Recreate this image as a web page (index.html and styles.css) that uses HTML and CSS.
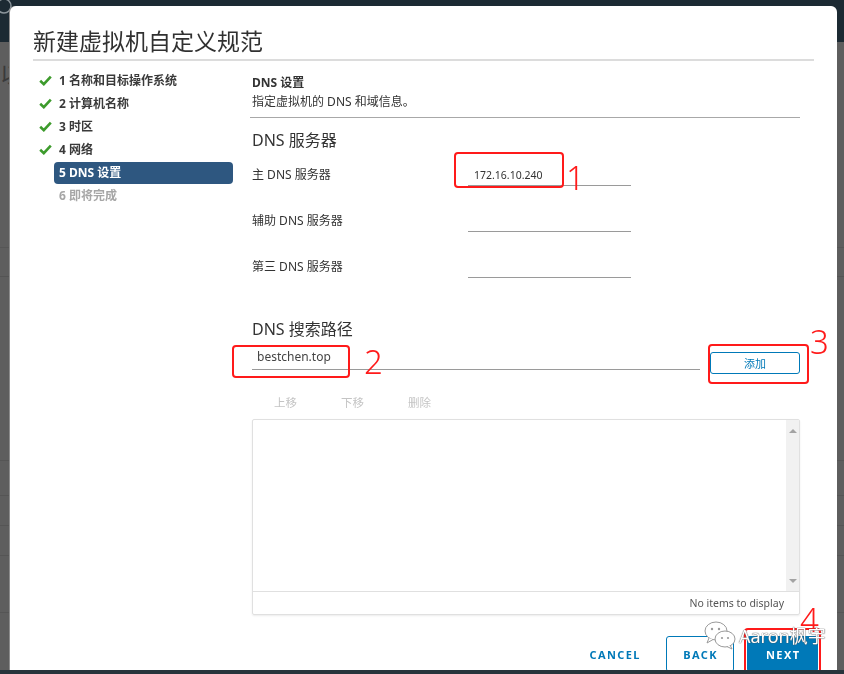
FILE: index.html
```html
<!DOCTYPE html>
<html lang="zh-CN">
<head>
    <meta charset="UTF-8">
    <meta name="viewport" content="width=device-width, initial-scale=1.0">
    <title>新建虚拟机自定义规范</title>
    <link rel="stylesheet" href="styles.css">
</head>
<body>
    <div class="topbar">
        <svg class="search-icon" width="20" height="20" viewBox="0 0 20 20"><circle cx="4" cy="6" r="7" fill="none" stroke="#8a949a" stroke-width="1.5"/></svg>
    </div>
    <div class="backdrop">
        <div class="bg-title">以相</div>
    </div>

    <div class="modal">
        <h1 class="modal-title">新建虚拟机自定义规范</h1>

        <div class="wizard">
            <ul class="steps">
                <li class="step done"><span class="mark"><svg width="13" height="11" viewBox="0 0 13 11"><path d="M1.2 5.8 L4.8 9.2 L11.8 1.6" fill="none" stroke="#3d9b2c" stroke-width="2.6"/></svg></span><span class="step-label">1 名称和目标操作系统</span></li>
                <li class="step done"><span class="mark"><svg width="13" height="11" viewBox="0 0 13 11"><path d="M1.2 5.8 L4.8 9.2 L11.8 1.6" fill="none" stroke="#3d9b2c" stroke-width="2.6"/></svg></span><span class="step-label">2 计算机名称</span></li>
                <li class="step done"><span class="mark"><svg width="13" height="11" viewBox="0 0 13 11"><path d="M1.2 5.8 L4.8 9.2 L11.8 1.6" fill="none" stroke="#3d9b2c" stroke-width="2.6"/></svg></span><span class="step-label">3 时区</span></li>
                <li class="step done"><span class="mark"><svg width="13" height="11" viewBox="0 0 13 11"><path d="M1.2 5.8 L4.8 9.2 L11.8 1.6" fill="none" stroke="#3d9b2c" stroke-width="2.6"/></svg></span><span class="step-label">4 网络</span></li>
                <li class="step active"><span class="mark"></span><span class="step-label">5 DNS 设置</span></li>
                <li class="step disabled"><span class="mark"></span><span class="step-label">6 即将完成</span></li>
            </ul>

            <div class="content">
                <h3 class="page-title">DNS 设置</h3>
                <p class="page-desc">指定虚拟机的 DNS 和域信息。</p>
                <div class="divider"></div>

                <h2 class="section">DNS 服务器</h2>
                <div class="form-row">
                    <label>主 DNS 服务器</label>
                    <div class="field">172.16.10.240</div>
                </div>
                <div class="form-row">
                    <label>辅助 DNS 服务器</label>
                    <div class="field"></div>
                </div>
                <div class="form-row">
                    <label>第三 DNS 服务器</label>
                    <div class="field"></div>
                </div>

                <h2 class="section search-title">DNS 搜索路径</h2>
                <div class="search-row">
                    <div class="search-field">bestchen.top</div>
                    <button class="btn-add">添加</button>
                </div>

                <div class="toolbar">
                    <span class="tool">上移</span>
                    <span class="tool">下移</span>
                    <span class="tool">删除</span>
                </div>

                <div class="grid">
                    <div class="grid-body">
                        <div class="grid-rows"></div>
                        <div class="scrollbar">
                            <span class="arrow-up"></span>
                            <span class="arrow-down"></span>
                        </div>
                    </div>
                    <div class="grid-footer">No items to display</div>
                </div>
            </div>
        </div>

        <div class="modal-footer">
            <button class="btn btn-flat">CANCEL</button>
            <button class="btn btn-outline">BACK</button>
            <button class="btn btn-primary">NEXT</button>
        </div>

        <!-- annotations -->
        <div class="mark-box box-1"></div>
        <div class="mark-num num-1">1</div>
        <div class="mark-box box-2"></div>
        <div class="mark-num num-2">2</div>
        <div class="mark-box box-3"></div>
        <div class="mark-num num-3">3</div>
        <div class="mark-box box-4"></div>
        <div class="mark-num num-4">4</div>

        <div class="watermark">
            <svg width="34" height="30" viewBox="0 0 34 30">
                <ellipse cx="13" cy="11" rx="11" ry="9" fill="#fff" stroke="#9a9a9a" stroke-width="1"/>
                <path d="M6 18 L4 23 L10 19.5" fill="#fff" stroke="#9a9a9a" stroke-width="1"/>
                <circle cx="9" cy="9" r="1.2" fill="#9a9a9a"/>
                <circle cx="16" cy="9" r="1.2" fill="#9a9a9a"/>
                <ellipse cx="22" cy="19" rx="10" ry="8" fill="#fff" stroke="#9a9a9a" stroke-width="1"/>
                <path d="M27 25 L29 29 L24 26.5" fill="#fff" stroke="#9a9a9a" stroke-width="1"/>
                <circle cx="19" cy="18" r="1.1" fill="#9a9a9a"/>
                <circle cx="25" cy="18" r="1.1" fill="#9a9a9a"/>
            </svg>
            <span>Aaron枫宇</span>
        </div>
    </div>

    <div class="bottombar"></div>
</body>
</html>
```

FILE: styles.css
```css
* {
    box-sizing: border-box;
}

body {
    margin: 0;
    padding: 0;
    height: 100vh;
    overflow: hidden;
    font-family: 'Noto Sans', 'Noto Sans CJK SC', sans-serif;
    color: #333;
    background-color: #5e5e5e;
}

.topbar {
    height: 42px;
    background-color: #1c2a33;
}

.search-icon {
    display: block;
}

.backdrop {
    height: calc(100vh - 42px);
    background-color: #5e5e5e;
    background-image:
        linear-gradient(#565656, #565656),
        linear-gradient(#545454, #545454),
        linear-gradient(#555, #555),
        linear-gradient(#555, #555),
        linear-gradient(#555, #555),
        linear-gradient(#555, #555),
        linear-gradient(#555, #555);
    background-size: 100% 1px;
    background-repeat: no-repeat;
    background-position: 0 205px, 0 234px, 0 418px, 0 453px, 0 483px, 0 513px, 0 570px;
}

.bg-title {
    padding-top: 14px;
    font-size: 22px;
    color: #3a3a3a;
}

.bottombar {
    position: fixed;
    left: 0;
    right: 0;
    bottom: 0;
    height: 4px;
    background-color: #27343c;
}

/* modal */

.modal {
    position: fixed;
    top: 6px;
    left: 10px;
    width: 827px;
    height: 700px;
    padding: 19px 23px 0;
    background-color: #ffffff;
    border-radius: 6px 6px 0 0;
    box-shadow: -1px 0 0 #8c8c8c;
}

.modal-title {
    margin: 0;
    font-size: 23px;
    line-height: 32px;
    font-weight: 400;
    color: #313131;
    padding-bottom: 2px;
    border-bottom: 2px solid #dcdcdc;
}

.wizard {
    display: flex;
    margin-top: 8px;
}

.steps {
    list-style: none;
    margin: 0;
    padding: 0;
    width: 219px;
    flex-shrink: 0;
}

.step {
    display: flex;
    align-items: center;
    height: 23px;
}

.step .mark {
    display: flex;
    align-items: center;
    width: 21px;
    padding-left: 6px;
}

.step .step-label {
    flex: 1;
    margin-right: 19px;
    padding: 0 5px;
    height: 22px;
    line-height: 22px;
    font-size: 12px;
    font-weight: 700;
    color: #3a3a3a;
    border-radius: 4px;
}

.step.active .step-label {
    background-color: #2e5780;
    color: #ffffff;
}

.step.disabled .step-label {
    color: #a6a6a6;
}

.content {
    width: 548px;
}

.page-title {
    margin: 6px 0 0;
    font-size: 12px;
    line-height: 16px;
    font-weight: 700;
    color: #333;
}

.page-desc {
    margin: 3px 0 0;
    font-size: 12px;
    line-height: 16px;
}

.divider {
    margin: 7px 0 0 -2px;
    border-top: 1px solid #a8a8a8;
}

.section {
    margin: 11px 0 0;
    font-size: 16px;
    line-height: 22px;
    font-weight: 400;
    color: #333;
}

.form-row {
    display: flex;
    align-items: center;
    height: 46px;
}

.form-row label {
    width: 216px;
    font-size: 12px;
}

.form-row .field {
    width: 163px;
    height: 23px;
    padding: 0 6px;
    line-height: 24px;
    font-size: 10.5px;
    color: #333;
    border-bottom: 1px solid #9a9a9a;
}

.search-title {
    margin-top: 29px;
}

.search-row {
    display: flex;
    align-items: flex-start;
    gap: 10px;
    margin-top: 12px;
}

.search-field {
    width: 448px;
    height: 21px;
    margin-top: -3px;
    padding: 0 5px;
    line-height: 16px;
    font-size: 12px;
    color: #444;
    border-bottom: 1px solid #9a9a9a;
}

.btn-add {
    width: 90px;
    height: 22px;
    padding: 0;
    font-family: inherit;
    font-size: 11px;
    color: #0079b8;
    background-color: #ffffff;
    border: 1px solid #0079b8;
    border-radius: 3px;
}

.toolbar {
    display: flex;
    margin-top: 21px;
    line-height: 16px;
}

.tool {
    padding: 0 22px;
    font-size: 11.5px;
    color: #c4c4c4;
}

.grid {
    margin-top: 8px;
    height: 196px;
    border: 1px solid #e0e0e0;
    border-radius: 2px;
    box-shadow: 0 1px 2px rgba(0, 0, 0, 0.08);
    display: flex;
    flex-direction: column;
}

.grid-body {
    flex: 1;
    display: flex;
}

.grid-rows {
    flex: 1;
}

.scrollbar {
    position: relative;
    width: 13px;
    background-color: #f1f1f1;
}

.arrow-up,
.arrow-down {
    position: absolute;
    left: 3px;
    width: 0;
    height: 0;
    border-left: 4px solid transparent;
    border-right: 4px solid transparent;
}

.arrow-up {
    top: 9px;
    border-bottom: 4px solid #a3a3a3;
}

.arrow-down {
    bottom: 8px;
    border-top: 4px solid #a3a3a3;
}

.grid-footer {
    height: 23px;
    line-height: 22px;
    padding-right: 15px;
    text-align: right;
    font-size: 10.5px;
    color: #555;
    border-top: 1px solid #e0e0e0;
}

.modal-footer {
    display: flex;
    justify-content: flex-end;
    gap: 13px;
    margin-top: 21px;
    margin-right: -4px;
}

.btn {
    height: 36px;
    padding: 0;
    font-family: 'Noto Sans', sans-serif;
    font-size: 11px;
    font-weight: 700;
    letter-spacing: 1.4px;
    text-indent: 1.4px;
    border-radius: 3px;
    border: 1px solid transparent;
    background-color: transparent;
    color: #0079b8;
}

.btn-flat {
    width: 77px;
}

.btn-outline {
    width: 68px;
    border-color: #0079b8;
    background-color: #ffffff;
}

.btn-primary {
    width: 71px;
    background-color: #0079b8;
    border-color: #0079b8;
    color: #ffffff;
}

/* annotations */

.mark-box {
    position: absolute;
    border: 2px solid #ff1a1a;
    border-radius: 4px;
}

.box-1 { left: 444px; top: 146px; width: 110px; height: 36px; }
.box-2 { left: 222px; top: 339px; width: 118px; height: 33px; }
.box-3 { left: 698px; top: 338px; width: 101px; height: 40px; }
.box-4 { left: 734px; top: 622px; width: 77px; height: 50px; }

.mark-num {
    position: absolute;
    font-family: 'Noto Sans', sans-serif;
    font-size: 33px;
    line-height: 1;
    font-weight: 300;
    color: #ff1a1a;
}

.num-1 { left: 556px; top: 155px; }
.num-2 { left: 354px; top: 339px; }
.num-3 { left: 800px; top: 319px; }
.num-4 { left: 790px; top: 597px; }

.watermark {
    position: absolute;
    left: 693px;
    top: 614px;
    display: flex;
    align-items: center;
    gap: 2px;
}

.watermark span {
    font-size: 18px;
    color: #ffffff;
    text-shadow: 0 0 1px #555, 0 0 1px #555;
}
```
